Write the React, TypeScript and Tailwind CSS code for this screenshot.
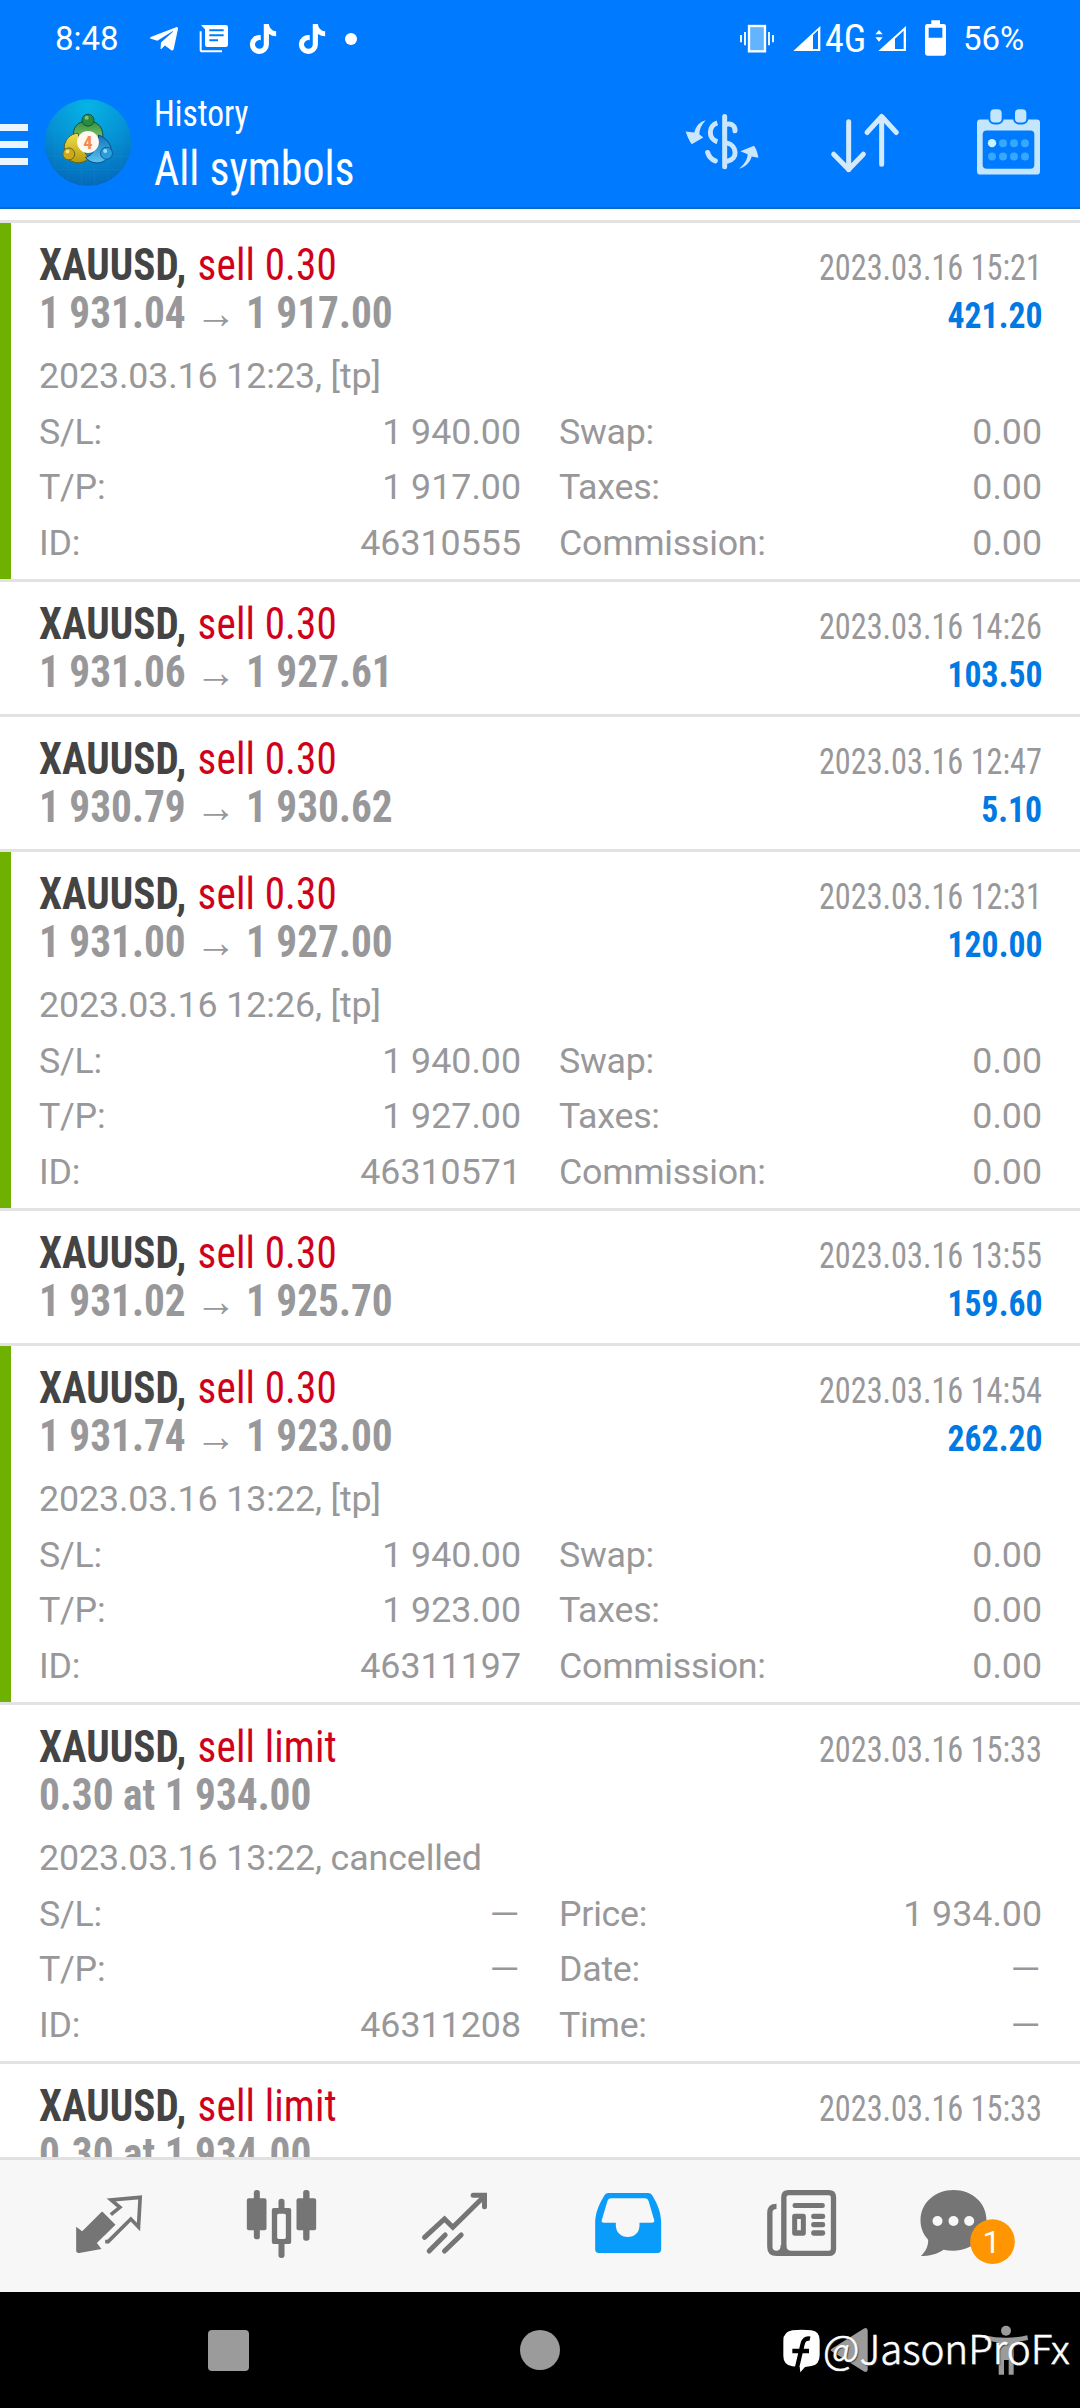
import type { ReactNode } from "react";
import { FaTelegramPlane, FaTiktok } from "react-icons/fa";

type Detail = { note: string; rows: [string, string, string, string][] };
type Deal = {
  action: string;
  price: string;
  time: string;
  profit?: string;
  marked?: boolean;
  detail?: Detail;
};

const closed = (note: string, tp: string, id: string): Detail => ({
  note,
  rows: [
    ["S/L:", "1 940.00", "Swap:", "0.00"],
    ["T/P:", tp, "Taxes:", "0.00"],
    ["ID:", id, "Commission:", "0.00"],
  ],
});

const deals: Deal[] = [
  { action: "sell 0.30", price: "1 931.04 → 1 917.00", time: "2023.03.16 15:21", profit: "421.20", marked: true, detail: closed("2023.03.16 12:23, [tp]", "1 917.00", "46310555") },
  { action: "sell 0.30", price: "1 931.06 → 1 927.61", time: "2023.03.16 14:26", profit: "103.50" },
  { action: "sell 0.30", price: "1 930.79 → 1 930.62", time: "2023.03.16 12:47", profit: "5.10" },
  { action: "sell 0.30", price: "1 931.00 → 1 927.00", time: "2023.03.16 12:31", profit: "120.00", marked: true, detail: closed("2023.03.16 12:26, [tp]", "1 927.00", "46310571") },
  { action: "sell 0.30", price: "1 931.02 → 1 925.70", time: "2023.03.16 13:55", profit: "159.60" },
  { action: "sell 0.30", price: "1 931.74 → 1 923.00", time: "2023.03.16 14:54", profit: "262.20", marked: true, detail: closed("2023.03.16 13:22, [tp]", "1 923.00", "46311197") },
  {
    action: "sell limit",
    price: "0.30 at 1 934.00",
    time: "2023.03.16 15:33",
    detail: {
      note: "2023.03.16 13:22, cancelled",
      rows: [
        ["S/L:", "–", "Price:", "1 934.00"],
        ["T/P:", "–", "Date:", "–"],
        ["ID:", "46311208", "Time:", "–"],
      ],
    },
  },
  { action: "sell limit", price: "0.30 at 1 934.00", time: "2023.03.16 15:33" },
];

function Value({ text }: { text: string }) {
  if (text === "–") {
    return <span className="inline-block origin-right scale-x-[1.42]">{text}</span>;
  }
  return <span>{text}</span>;
}

function DealRow({ deal }: { deal: Deal }) {
  return (
    <section className="flex shrink-0 border-t-[3px] border-[#e2e2e2]">
      <div className={deal.marked ? "w-[11px] bg-[#6fb100]" : "w-[11px]"} />
      <div className={deal.detail ? "flex-1 pt-[18px] pr-[38px] pb-2 pl-7" : "flex-1 pt-[18px] pr-[38px] pb-[18px] pl-7"}>
        <div className="flex h-12 items-baseline justify-between font-['Roboto_Condensed',Roboto,sans-serif] leading-[48px]">
          <p className="origin-left scale-x-[.935] text-[44px] whitespace-nowrap text-[#d0021b]">
            <span className="mr-0.5 font-bold text-[#444444]">XAUUSD,</span> <span className="font-[450] tracking-[0.15px]">{deal.action}</span>
          </p>
          <p className="origin-right scale-x-[.896] text-4xl leading-[48px] whitespace-nowrap text-[#98989a]">{deal.time}</p>
        </div>
        <div className="flex h-12 items-baseline justify-between font-['Roboto_Condensed',Roboto,sans-serif] leading-[48px] font-bold">
          <p className="origin-left scale-x-[.938] text-[44px] whitespace-nowrap text-[#98989a]">{deal.price}</p>
          <p className="origin-right scale-x-[.935] text-4xl leading-[48px] text-[#0079e3]">{deal.profit}</p>
        </div>
        {deal.detail && (
          <div className="mt-3 text-[35.75px] leading-[55.5px] text-[#98989a]">
            <p className="tracking-[-0.1px]">{deal.detail.note}</p>
            {deal.detail.rows.map(([a, b, c, d]) => (
              <div key={a} className="flex gap-[38px]">
                <p className="flex w-[482px] justify-between"><span className="tracking-[-0.25px]">{a}</span><Value text={b} /></p>
                <p className="flex flex-1 justify-between"><span className="tracking-[-0.25px]">{c}</span><Value text={d} /></p>
              </div>
            ))}
          </div>
        )}
      </div>
    </section>
  );
}

function AppLogo() {
  return (
    <svg className="ml-4 size-[88px]" viewBox="13 27 266 266">
      <defs>
        <radialGradient id="sky" cx=".5" cy=".08" r=".95">
          <stop offset="0" stopColor="#06b4e6" />
          <stop offset=".5" stopColor="#0592d4" />
          <stop offset="1" stopColor="#0566b8" />
        </radialGradient>
        <linearGradient id="green" x2="0" y2="1"><stop stopColor="#2f8d3a" /><stop offset="1" stopColor="#8ccb6c" /></linearGradient>
        <linearGradient id="yellow" x2="0" y2="1"><stop stopColor="#efe04a" /><stop offset="1" stopColor="#b59a0e" /></linearGradient>
        <linearGradient id="blue" x2="0" y2="1"><stop stopColor="#1273b8" /><stop offset="1" stopColor="#5cc4f0" /></linearGradient>
      </defs>
      <circle cx="146" cy="159" r="131" fill="url(#sky)" />
      <g stroke="#2fa4de" strokeOpacity=".3" strokeWidth="1.5">
        <path d="M46 80V240M86 45V273M126 30V288M166 30V288M206 45V273M246 80V240M22 120H270M16 160H276M22 200H270M42 240H250" />
      </g>
      <path d="M146 93C118 93 102 110 102 132L126 152L168 150L190 152C196 118 178 93 146 93Z" fill="url(#green)" stroke="#0d4f4c" strokeWidth="3" />
      <path d="M116 130C92 132 76 150 74 172L84 208C108 226 134 222 148 206L124 170Z" fill="url(#yellow)" stroke="#5b5d22" strokeWidth="3" />
      <path d="M178 136C198 142 214 160 216 180L204 208C184 226 156 224 138 204C164 196 176 168 178 136Z" fill="url(#blue)" stroke="#0a4b83" strokeWidth="3" />
      <circle cx="146" cy="91" r="18" fill="#2c8a3e" stroke="#11533a" strokeWidth="3" />
      <circle cx="142" cy="84" r="6" fill="#7dc47a" />
      <circle cx="88" cy="193" r="18" fill="#cda917" stroke="#6d641c" strokeWidth="3" />
      <circle cx="84" cy="186" r="6" fill="#f2e483" />
      <circle cx="202" cy="191" r="18" fill="#2c9cdc" stroke="#0d5a94" strokeWidth="3" />
      <circle cx="198" cy="184" r="6" fill="#9adcf8" />
      <circle cx="146" cy="157" r="33" fill="#fff8f0" />
      <text x="146" y="177" textAnchor="middle" fontSize="56" fontWeight="700" fill="#f58a4b" className="font-['Roboto_Condensed']">4</text>
    </svg>
  );
}

function StatusBar() {
  return (
    <div className="flex h-[78px] items-center text-[33px] font-medium text-white">
      <span className="ml-[55px] w-[93px] shrink-0 font-[450]">8:48</span>
      <FaTelegramPlane className="size-8" />
      <svg className="ml-[18px] size-8" viewBox="594 69 96 96">
        <path fill="#fff" fillRule="evenodd" d="M603 75H677a7 7 0 0 1 7 7V134a7 7 0 0 1-7 7H622a7 7 0 0 1-7-7V88ZM628 88V94H671V88ZM628 103V109H671V103ZM628 118V124H654V118Z" />
        <path fill="none" stroke="#fff" strokeWidth="6" d="M602 94V149a5 5 0 0 0 5 5H666" />
      </svg>
      <FaTiktok className="ml-[18px] size-[30px]" />
      <FaTiktok className="ml-[19px] size-[30px]" />
      <span className="ml-[18px] size-3 shrink-0 rounded-full bg-white" />
      <svg className="ml-auto h-[38px] w-9" viewBox="297 60 108 114">
        <rect x="327" y="78" width="48" height="76" fill="#62b4ff" stroke="#fff" strokeWidth="7" />
        <path fill="none" stroke="#e8f6ff" strokeWidth="6" d="M303 105V127M315 96V136M387 96V136M399 105V127" />
      </svg>
      <svg className="ml-[17px] h-[38px] w-[30px]" viewBox="456 60 90 114">
        <path fill="#fff" fillRule="evenodd" d="M460 153L541 78V153ZM519 105V147H534V91Z" />
      </svg>
      <span className="ml-[3px] w-[40px] shrink-0 font-['Roboto_Condensed',Roboto,sans-serif] text-[38px] leading-none font-[450]">4G</span>
      <svg className="ml-[9px] h-[38px] w-[34px]" viewBox="702 60 102 114">
        <path fill="#fff" fillRule="evenodd" d="M715 153L798 78V153ZM765 116V147H791V92ZM706 103L717 90L728 103ZM706 112H728L717 125Z" />
      </svg>
      <svg className="ml-4 h-[38px] w-6" viewBox="852 60 72 114">
        <path fill="#fff" fillRule="evenodd" d="M874 61H900V72H911a7 7 0 0 1 7 7V160a7 7 0 0 1-7 7H862a7 7 0 0 1-7-7V79a7 7 0 0 1 7-7H874ZM866 83V113H907V83Z" />
      </svg>
      <span className="mr-[56px] ml-[15px] w-[61px] shrink-0 font-normal">56%</span>
    </div>
  );
}

function Toolbar() {
  return (
    <div className="flex h-[129px] items-center">
      <div className="mt-1 flex w-7 flex-col gap-[10px]">
        <span className="h-[7px] bg-[#eaf6ff]" />
        <span className="h-[7px] bg-[#eaf6ff]" />
        <span className="h-[7px] bg-[#eaf6ff]" />
      </div>
      <AppLogo />
      <div className="mt-1 ml-[22px] flex-1 font-['Roboto_Condensed',Roboto,sans-serif] whitespace-nowrap text-white">
        <p className="origin-left scale-x-[.93] text-4xl leading-[48px]">History</p>
        <p className="origin-left scale-x-[.914] text-[48px] leading-[62px]">All symbols</p>
      </div>
      <div className="mr-8 flex gap-[63px]">
        <svg className="size-20" viewBox="126 307.5 240 240" fill="none" stroke="#c9e6fd" strokeWidth="15" strokeLinecap="round">
          <path d="M254 348V499" />
          <path d="M262 371C276 368 286 378 285 391M262 428C290 434 296 476 262 482" />
          <path strokeLinecap="butt" d="M232 367C205 375 203 415 232 424" />
          <path d="M203 456C207 469 215 477 226 481" strokeLinecap="round" />
          <path fill="#c9e6fd" stroke="none" d="M197 359C180 363 168 375 163 396L137 393C141 406 147 420 155 431L190 411L178 401C178 388 184 372 197 359ZM297 505C314 490 322 478 323 461L301 452L342 436C350 447 353 459 355 472L335 468C330 486 316 500 297 505Z" />
        </svg>
        <svg className="size-20" viewBox="555 307.5 240 240" fill="none" stroke="#d3e9fc" strokeWidth="15" strokeLinecap="round" strokeLinejoin="round">
          <path d="M626 364V508M581 461L626 507L670 461M725 491V349M681 396L725 348L769 396" />
        </svg>
        <svg className="size-20" viewBox="984 307.5 240 240">
          <path fill="#c3e6fd" fillRule="evenodd" d="M1020 357H1190a10 10 0 0 1 10 10V512a10 10 0 0 1-10 10H1021a10 10 0 0 1-10-10V367a10 10 0 0 1 9-10ZM1040 390a12 12 0 0 0-12 12V493a12 12 0 0 0 12 12H1171a12 12 0 0 0 12-12V402a12 12 0 0 0-12-12Z" />
          <g fill="#c3e6fd" stroke="#007bff" strokeWidth="6">
            <rect x="1048" y="323" width="40" height="46" rx="15" />
            <rect x="1122" y="323" width="40" height="46" rx="15" />
          </g>
          <circle cx="1056" cy="428" r="12.500" fill="#c9f2ff" />
          <g fill="#35a8ff">
            <circle cx="1089" cy="428" r="12" /><circle cx="1122" cy="428" r="12" /><circle cx="1155" cy="428" r="12" />
            <circle cx="1056" cy="468" r="12" /><circle cx="1089" cy="468" r="12" /><circle cx="1122" cy="468" r="12" /><circle cx="1155" cy="468" r="12" />
          </g>
        </svg>
      </div>
    </div>
  );
}

function Tab({ viewBox, children }: { viewBox: string; children: ReactNode }) {
  return (
    <button className="flex justify-center pt-[10px]">
      <svg className="size-[110px]" viewBox={viewBox}>{children}</svg>
    </button>
  );
}

function TabBar() {
  return (
    <nav className="grid h-[135px] shrink-0 grid-cols-6 border-t-[3px] border-[#e1e1e1] bg-[#f7f7f7] px-[21px]">
      <Tab viewBox="-22.5 0 330 330">
        <path fill="#757575" d="M127 126L165 164L109 219L123 237L56 249Q47 250 47 241V170L65 184L120 129Q124 124 127 126Z" />
        <path fill="none" stroke="#757575" strokeWidth="11" strokeLinejoin="miter" d="M151 134L178 112L152 90L239 82L234 171L211 147L143 215H134" />
      </Tab>
      <Tab viewBox="496.5 0 330 330">
        <g fill="#757575">
          <rect x="559" y="85" width="59" height="96" rx="6" /><rect x="580" y="60" width="18" height="148" rx="8" />
          <rect x="708" y="85" width="59" height="96" rx="6" /><rect x="728" y="60" width="19" height="152" rx="8" />
          <rect x="634" y="114" width="58" height="108" rx="6" /><rect x="654" y="86" width="18" height="178" rx="8" />
        </g>
        <rect x="650" y="131" width="26" height="76" rx="5" fill="#f7f7f7" />
      </Tab>
      <Tab viewBox="1015.500 0 330 330">
        <path fill="none" stroke="#757575" strokeWidth="15" strokeLinecap="round" strokeLinejoin="miter" d="M1092 202L1152 147L1177 172L1270 80M1106 243L1154 195M1152 243L1202 195" />
        <path fill="none" stroke="#757575" strokeWidth="15" strokeLinecap="round" d="M1238 76H1272V110" />
      </Tab>
      <Tab viewBox="-25.5 0 330 330">
        <path fill="#0a9cfb" fillRule="evenodd" d="M84 69H203Q211 69 215 76C232 103 242 130 242 160V238Q242 249 231 249H55Q44 249 44 238V160C44 130 55 103 72 76Q76 69 84 69ZM92 85Q84 85 81 92L64 150Q62 158 70 158H106V166C106 188 122 201 142 201C162 201 177 188 177 166V158H214Q223 158 221 150L204 92Q201 85 193 85Z" />
      </Tab>
      <Tab viewBox="493.5 0 330 330">
        <path fill="none" stroke="#757575" strokeWidth="16" d="M588 109Q568 109 568 128V230Q568 250 588 250H745Q759 250 759 236V82Q759 68 745 68H624Q610 68 610 82V228Q610 250 590 250" />
        <g fill="#757575">
          <path d="M600 225Q602 238 590 244H636Q617 242 617 225Z" />
          <rect x="636" y="99" width="97" height="15" rx="7" />
          <path fillRule="evenodd" d="M643 131H668Q676 131 676 139V189Q676 197 668 197H643Q635 197 635 189V139Q635 131 643 131ZM650 147V181H661V147Z" />
          <rect x="692" y="131" width="42" height="16" rx="7" /><rect x="692" y="156" width="42" height="16" rx="7" /><rect x="692" y="181" width="42" height="16" rx="7" />
        </g>
      </Tab>
      <Tab viewBox="1012.500 0 330 330">
        <path fill="#757575" d="M1119 60C1175 60 1218 99 1218 151C1218 203 1175 242 1119 242Q1102 242 1089 239C1072 252 1045 258 1021 258C1035 245 1044 228 1043 209C1028 193 1020 174 1020 151C1020 99 1064 60 1119 60Z" />
        <g fill="#f7f7f7"><circle cx="1071" cy="153" r="15" /><circle cx="1119" cy="153" r="15" /><circle cx="1166" cy="153" r="15" /></g>
        <circle cx="1236" cy="215" r="67" fill="#ff9500" />
        <text x="1233" y="248" textAnchor="middle" fontSize="96" fontWeight="400" fill="#fff" className="font-[Roboto]">1</text>
      </Tab>
    </nav>
  );
}

function SystemBar() {
  return (
    <footer className="relative flex h-[116px] shrink-0 items-center bg-black pl-[208px]">
      <span className="h-[41px] w-[41px] rounded-[4px] bg-[#9b9b9b]" />
      <span className="ml-[271px] size-10 rounded-full bg-[#9b9b9b]" />
      <svg className="ml-[270px] h-[46px] w-[38px]" viewBox="178 81 114 138">
        <path fill="#9b9b9b" d="M183 146L279 86Q291 80 291 92V208Q291 220 279 214L183 154Q177 150 183 146Z" />
      </svg>
      <svg className="ml-[115px] h-[50px] w-[46px]" viewBox="638 75 138 150">
        <g fill="#9b9b9b"><circle cx="707" cy="92" r="15" /><path d="M642 106C685 116 729 116 771 106L773 120L730 128V224H715V180H701V224H685V128L644 120Z" /></g>
      </svg>
      <div className="absolute top-[37px] left-[783px] flex items-start">
        <svg className="h-[46px] w-[38px]" viewBox="40 87 114 138">
          <path fill="#fff" d="M68 91Q96 87 125 91Q150 95 150 120V165Q150 195 125 198L106 201L92 217L90 201L68 199Q41 195 41 168V122Q41 95 68 91Z" />
          <path fill="none" stroke="#000" strokeWidth="13" d="M121 116C108 113 101 121 98 135L82 203M68 153H118" />
        </svg>
        <p className="-mt-[5px] ml-0.5 w-[248px] origin-left scale-x-[1.005] font-['Noto_Sans_CJK_SC',sans-serif] text-[40px] leading-[46px] font-light whitespace-nowrap text-white [-webkit-text-stroke:0.6px_white] [text-shadow:1px_1px_1px_#333]">@JasonProFx</p>
      </div>
    </footer>
  );
}

export default function App() {
  return (
    <div className="flex h-[2408px] w-[1080px] flex-col overflow-hidden bg-white font-[Roboto,sans-serif]">
      <header className="shrink-0 border-b-2 border-[#006dcb] bg-[#007bff]">
        <StatusBar />
        <Toolbar />
      </header>
      <main className="flex min-h-0 flex-1 flex-col overflow-hidden pt-[11px]">
        {deals.map((deal, i) => <DealRow key={i} deal={deal} />)}
      </main>
      <TabBar />
      <SystemBar />
    </div>
  );
}
